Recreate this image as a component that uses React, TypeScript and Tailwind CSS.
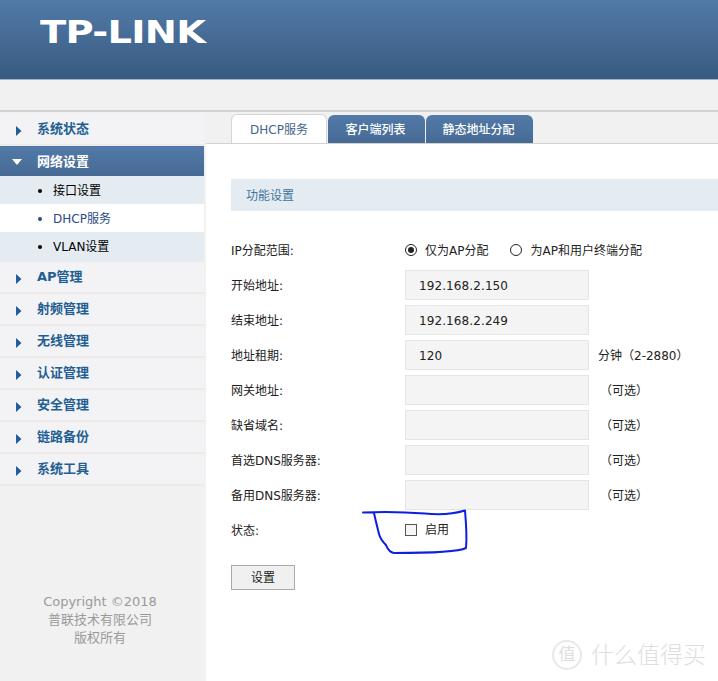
import React from "react";

const font = { fontFamily: '"DejaVu Sans", "Noto Sans CJK SC", sans-serif' };

const Arrow = () => (
	<svg width="6" height="12" viewBox="0 0 6 12" className="mt-[3px] ml-4 mr-[15px] shrink-0">
		<path d="M0 1 L5.5 6 L0 11 Z" fill="#1f5f99" />
	</svg>
);

const MenuItem = ({ label }: { label: string }) => (
	<div className="flex h-[32px] items-center border-b-2 border-[#ece9e6] bg-[#f3f3f5] text-[13px] font-bold text-[#1f5f94]">
		<Arrow />
		{label}
	</div>
);

const SubItem = ({ label, active, tall }: { label: string; active?: boolean; tall?: boolean }) => (
	<div
		className={`flex items-center pt-px text-xs ${tall ? "h-[30px] pb-[2px]" : "h-[28px]"} ${
			active ? "bg-white text-[#2b4a86]" : "bg-[#e4ecf2] text-black"
		}`}
	>
		<span className={`ml-[38px] mr-[11px] h-[4px] w-[4px] rounded-full ${active ? "bg-[#2b4a86]" : "bg-black"}`} />
		{label}
	</div>
);

const Row = ({ label, children }: { label: string; children: React.ReactNode }) => (
	<div className="flex h-[35px] items-center text-xs text-[#222]">
		<div className="w-[174px] shrink-0 pt-[2px]">{label}</div>
		{children}
	</div>
);

const Field = ({ value, suffix }: { value?: string; suffix: React.ReactNode }) => (
	<>
		<div className="flex h-[30px] w-[184px] items-center border border-[#e5e5e5] bg-[#f4f4f4] pt-[2px] pl-[13px] text-xs tracking-[0.1px] text-[#222]">
			{value}
		</div>
		{suffix}
	</>
);

const Optional = () => <span className="ml-[11px] pt-[2px] text-xs">（可选）</span>;

const App = () => {
	const menu = ["AP管理", "射频管理", "无线管理", "认证管理", "安全管理", "链路备份", "系统工具"];
	return (
		<div className="relative h-[681px] w-[718px] overflow-hidden bg-white" style={font}>
			{/* header */}
			<div className="flex h-[80px] items-start border-b border-[#9fb0c2] bg-gradient-to-b from-[#527aa8] to-[#385a80] pl-[40px]">
				<div
					className="mt-[13px] origin-left scale-x-[1.2] text-[32px] leading-[38px] font-bold tracking-[-0.6px] text-white"
					style={{ fontFamily: '"DejaVu Sans", sans-serif' }}
				>
					TP-LINK
				</div>
			</div>
			<div className="h-[32px] border-b-2 border-[#d2d2d2] bg-[#f1f1f1]" />

			<div className="flex">
				{/* sidebar */}
				<div className="h-[569px] w-[206px] shrink-0 bg-[#f1f1f1] pr-[2px]">
					<div className="h-[2px]" />
					<MenuItem label="系统状态" />
					<div className="flex h-[30px] items-center bg-gradient-to-b from-[#527aa8] to-[#466a94] pt-px text-[13px] font-bold text-white">
						<svg width="10" height="6" viewBox="0 0 10 6" className="ml-[12px] mr-[15px]">
							<path d="M0 0 H10 L5 6 Z" fill="#fff" />
						</svg>
						网络设置
					</div>
					<SubItem label="接口设置" />
					<SubItem label="DHCP服务" active />
					<SubItem label="VLAN设置" tall />
					{menu.map((m) => (
						<MenuItem key={m} label={m} />
					))}
					<div className="mt-[107px] pr-1 text-center text-[13px] leading-[18px] text-[#9a9a9a]">
						<div>Copyright ©2018</div>
						<div>普联技术有限公司</div>
						<div>版权所有</div>
					</div>
				</div>

				{/* content */}
				<div className="min-w-0 flex-1">
					<div className="flex h-[31px] items-end gap-px bg-[#f1f1f1] pl-[25px]">
						<div className="flex h-[29px] w-[96px] items-center justify-center rounded-t-md border border-b-0 border-[#d5d5d5] bg-white pt-[2px] text-xs text-[#44658c]">
							DHCP服务
						</div>
						<div className="flex h-[28px] w-[97px] items-center justify-center rounded-t-md bg-gradient-to-b from-[#527aa8] to-[#466a94] pt-[2px] pr-[2px] text-xs font-medium text-white">
							客户端列表
						</div>
						<div className="flex h-[28px] w-[107px] items-center justify-center rounded-t-md bg-gradient-to-b from-[#527aa8] to-[#466a94] pt-[2px] pr-[2px] text-xs font-medium text-white">
							静态地址分配
						</div>
					</div>
					<div className="border-t border-[#d2d2d2] pt-[35px] pl-[25px]">
						<div className="flex h-[32px] items-center bg-[#e4ecf2] pt-[2px] pl-[15px] text-xs text-[#3f74a0]">功能设置</div>
						<div className="mt-[21px]">
							<Row label="IP分配范围:">
								<span className="flex h-[12px] w-[12px] items-center justify-center rounded-full border border-[#222]">
									<span className="h-[6px] w-[6px] rounded-full bg-[#222]" />
								</span>
								<span className="ml-2 pt-[2px]">仅为AP分配</span>
								<span className="ml-[22px] h-[12px] w-[12px] rounded-full border border-[#222]" />
								<span className="ml-2 pt-[2px]">为AP和用户终端分配</span>
							</Row>
							<Row label="开始地址:">
								<Field value="192.168.2.150" suffix={null} />
							</Row>
							<Row label="结束地址:">
								<Field value="192.168.2.249" suffix={null} />
							</Row>
							<Row label="地址租期:">
								<Field value="120" suffix={<span className="ml-[9px] pt-[2px] text-xs">分钟（2-2880）</span>} />
							</Row>
							<Row label="网关地址:">
								<Field suffix={<Optional />} />
							</Row>
							<Row label="缺省域名:">
								<Field suffix={<Optional />} />
							</Row>
							<Row label="首选DNS服务器:">
								<Field suffix={<Optional />} />
							</Row>
							<Row label="备用DNS服务器:">
								<Field suffix={<Optional />} />
							</Row>
							<Row label="状态:">
								<span className="h-[12px] w-[12px] border border-[#555] bg-[#f6f6f6]" />
								<span className="ml-2">启用</span>
							</Row>
						</div>
						<button className="mt-[18px] flex h-[25px] w-[64px] items-center justify-center border border-[#aaa] bg-[#f0f0f0] text-xs text-[#222]">
							设置
						</button>
					</div>
				</div>
			</div>

			{/* blue pen mark over the form */}
			<svg width="718" height="681" className="pointer-events-none absolute top-0 left-0">
				<path
					d="M363 512.5 C385 511.5 405 512 425 513.5 C440 515 455 513.5 465 510.5 C466 522 467 538 466 548 C458 552 425 553 394 553 C388 552 387 547 386 545 C382 541 380 538 379 534 C377 526 375 518 374 513"
					fill="none"
					stroke="#0d1fe0"
					strokeWidth="2"
					strokeLinecap="round"
					strokeLinejoin="round"
				/>
			</svg>

			{/* watermark */}
			<div className="absolute top-[640px] left-[552px] flex items-center text-[#dedede]">
				<div className="flex h-[30px] w-[30px] items-center justify-center rounded-full border-2 border-[#e8e8e8] text-[17px]">值</div>
				<div className="ml-[9px] text-[23px] leading-[30px] font-light">什么值得买</div>
			</div>
		</div>
	);
};

export default App;
